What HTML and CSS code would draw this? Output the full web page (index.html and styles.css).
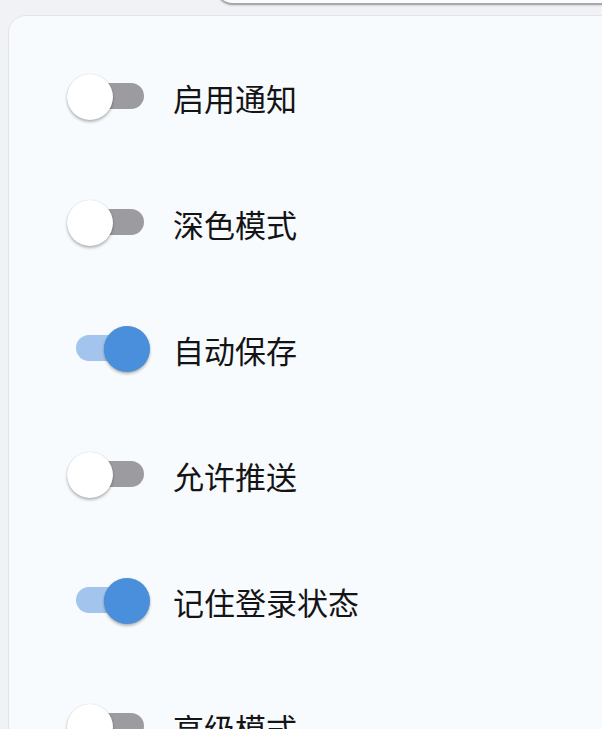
FILE: index.html
```html
<!DOCTYPE html>
<html lang="zh-CN">
<head>
<meta charset="UTF-8">
<meta name="viewport" content="width=device-width, initial-scale=1.0">
<title>设置</title>
<link rel="stylesheet" href="styles.css">
</head>
<body>

<div class="search-box"></div>

<div class="settings">
  <div class="row">
    <div class="switch"><span class="thumb"></span></div>
    <span class="label">启用通知</span>
  </div>
  <div class="row">
    <div class="switch"><span class="thumb"></span></div>
    <span class="label">深色模式</span>
  </div>
  <div class="row">
    <div class="switch on"><span class="thumb"></span></div>
    <span class="label">自动保存</span>
  </div>
  <div class="row">
    <div class="switch"><span class="thumb"></span></div>
    <span class="label">允许推送</span>
  </div>
  <div class="row">
    <div class="switch on"><span class="thumb"></span></div>
    <span class="label">记住登录状态</span>
  </div>
  <div class="row">
    <div class="switch"><span class="thumb"></span></div>
    <span class="label">高级模式</span>
  </div>
</div>

<script>
  // Basculer chaque interrupteur au clic
  document.querySelectorAll('.switch').forEach(sw => {
    sw.addEventListener('click', () => {
      sw.classList.toggle('on');
    });
  });
</script>
</body>
</html>
```

FILE: styles.css
```css
html {
  overflow: hidden;
}

body {
  font-family: "Noto Sans CJK SC", "Noto Sans", sans-serif;
  margin: 0;
  padding: 0;
  background-color: #f1f2f6;
  width: 640px;
}

.search-box {
  height: 57px;
  margin-top: -55px;
  margin-left: 215px;
  border: 1px solid #d4d4d8;
  border-bottom: 2px solid #a9a9ad;
  border-radius: 18px;
  background-color: #fbfbfc;
  box-shadow: 0 1px 2px rgba(0, 0, 0, 0.12);
}

.settings {
  margin-top: 10px;
  margin-left: 8px;
  width: 640px;
  height: 800px;
  padding: 58px 0 0 58px;
  border: 1px solid #e3e5ea;
  border-radius: 18px;
  background-color: #f8fbfd;
  display: flex;
  flex-direction: column;
  gap: 80px;
}

.row {
  display: flex;
  align-items: center;
  height: 46px;
}

.switch {
  position: relative;
  width: 84px;
  height: 46px;
  cursor: pointer;
  flex-shrink: 0;
}

.switch::before {
  content: "";
  position: absolute;
  left: 9px;
  right: 7px;
  top: 9px;
  height: 26px;
  border-radius: 13px;
  background-color: #9c9ca0;
}

.switch .thumb {
  position: absolute;
  left: 0;
  top: 0;
  width: 46px;
  height: 46px;
  border-radius: 50%;
  background-color: #ffffff;
  box-shadow: 0 2px 3px rgba(0, 0, 0, 0.28), 0 0 1px rgba(0, 0, 0, 0.2);
}

.switch.on::before {
  background-color: #a2c4ed;
}

.switch.on .thumb {
  left: 37px;
  background-color: #4a8fdb;
}

.label {
  margin-left: 22px;
  font-size: 31px;
  color: #141416;
}
```
